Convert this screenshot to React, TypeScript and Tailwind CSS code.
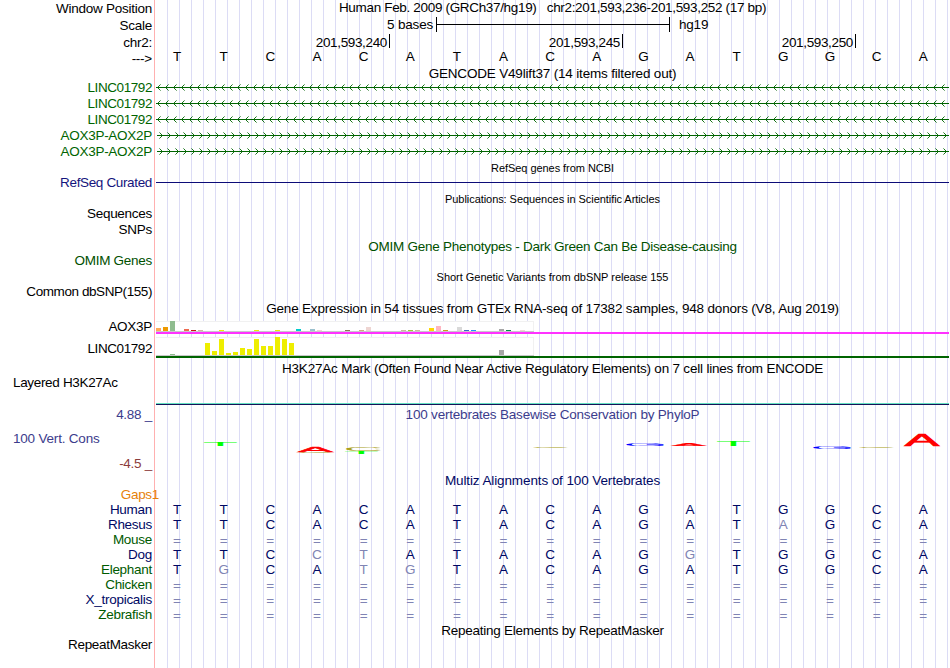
import React from 'react';

type Bar = [number, number, string];

const SEQ = 'TTCACATACAGATGGCA';

const AOX3P: Bar[] = [
  [0, 3, '#ffaa56'], [1, 4, '#ee9a00'], [2, 10, '#8fbc8f'], [4, 2, '#ee6a50'], [5, 1, '#cd1010'],
  [6, 1, '#cdb79e'], [9, 1, '#eeee00'], [14, 1, '#eeee00'], [17, 1, '#eeee00'], [20, 2, '#00cdcd'],
  [22, 2, '#9ac0cd'], [23, 1, '#eed5d2'], [27, 1, '#8b7355'], [29, 1, '#cdaa7d'], [30, 4, '#eed5d2'],
  [35, 1, '#cdb79e'], [36, 1, '#9acd32'], [37, 1, '#cdb79e'], [39, 3, '#ffd700'], [40, 5, '#ffb6c1'],
  [41, 1, '#cd9b1d'], [43, 4, '#d9d9d9'], [44, 1, '#3a5fcd'], [45, 1, '#1e90ff'], [49, 2, '#a6a6a6'],
  [50, 1, '#008b45'], [52, 1, '#eed5d2'],
];

const LINC: Bar[] = [
  [2, 1, '#8fbc8f'], [7, 12, '#eeee00'], [8, 4, '#eeee00'], [9, 16, '#eeee00'], [10, 2, '#eeee00'],
  [11, 3, '#eeee00'], [12, 7, '#eeee00'], [13, 6, '#eeee00'], [14, 16, '#eeee00'], [15, 9, '#eeee00'],
  [16, 9, '#eeee00'], [17, 18, '#eeee00'], [18, 16, '#eeee00'], [19, 12, '#eeee00'], [49, 5, '#a6a6a6'],
];

// lower case marks a base that differs from human
const SPECIES = [
  { name: 'Human', color: 'text-[#000864]', seq: 'TTCACATACAGATGGCA' },
  { name: 'Rhesus', color: 'text-[#000864]', seq: 'TTCACATACAGATaGCA' },
  { name: 'Mouse', color: 'text-[#005a00]', seq: '=================' },
  { name: 'Dog', color: 'text-[#000864]', seq: 'TTCctATACAGgTGGCA' },
  { name: 'Elephant', color: 'text-[#005a00]', seq: 'TgCAtgTACAGATGGCA' },
  { name: 'Chicken', color: 'text-[#005a00]', seq: '=================' },
  { name: 'X_tropicalis', color: 'text-[#000864]', seq: '=================' },
  { name: 'Zebrafish', color: 'text-[#005a00]', seq: '=================' },
];

// letter, left, right, top, bottom, colour
const LOGO: [string, number, number, number, number, string][] = [
  ['T', 48, 81, 2, 6, '#00ff00'],
  ['C', 143, 177, 11.4, 12.6, '#aaa020'],
  ['A', 142, 177, 7, 12, '#ff0000'],
  ['C', 190, 225, 7, 11, '#aaa020'],
  ['T', 189, 222, 11, 14, '#00ff00'],
  ['C', 377, 412, 7, 8, '#aaa020'],
  ['G', 470, 508, 3, 6, '#0000ff'],
  ['A', 516, 550, 4, 6, '#ff0000'],
  ['T', 561, 594, 1, 6, '#00ff00'],
  ['G', 657, 695, 7, 9, '#0000ff'],
  ['C', 703, 738, 7, 8, '#aaa020'],
  ['A', 749, 783, -5, 6, '#ff0000'],
];

// ink box of each letter at font size 100: left, width, bottom overshoot, height
const INK: Record<string, [number, number, number, number]> = {
  A: [0.3, 66, 0, 68.8],
  C: [5, 63.5, 1, 71],
  G: [5, 66.5, 1, 71],
  T: [2, 57, 0, 68.8],
};

interface RowProps {
  h: string;
  label?: React.ReactNode;
  color?: string;
  labelClass?: string;
  children?: React.ReactNode;
}

const Row = ({ h, label, color = 'text-black', labelClass = 'justify-end pr-[2px] tracking-[-0.28px]', children }: RowProps) => (
  <div className={`flex gap-px ${h}`}>
    <div className={`relative z-10 flex w-[155px] shrink-0 items-center whitespace-pre border-r border-[#ffb0b0] ${color} ${labelClass}`}>
      {label}
    </div>
    <div className="w-[793px] shrink-0 bg-[linear-gradient(to_right,#dcdcf5_1px,transparent_1px)] bg-[length:12px_100%] bg-[position:11px_0]">
      {children}
    </div>
  </div>
);

const Title = ({ children, className = 'tracking-[-0.2px]' }: { children: React.ReactNode; className?: string }) => (
  <div className={`flex h-full items-center justify-center whitespace-pre ${className}`}>{children}</div>
);

const Bases = ({ seq, className = '' }: { seq: string; className?: string }) => (
  <div className={`-ml-[2.3px] flex h-full w-[793px] items-center ${className}`}>
    {seq.split('').map((c, i) => (
      <span
        key={i}
        className={`flex-1 text-center ${c === '=' ? 'pt-[3px] text-[#8084b4]' : c !== c.toUpperCase() ? 'text-[#8084b4]' : ''}`}
      >
        {c.toUpperCase()}
      </span>
    ))}
  </div>
);

const Gene = ({ left }: { left?: boolean }) => (
  <svg width="793" height="16" shapeRendering="crispEdges" fill="#006400" className="block">
    <rect x={left ? 0 : 1} y="7" width="793" height="1" />
    {Array.from({ length: 100 }, (_, i) => {
      const x = left ? 1 + i * 8 : 6 + i * 8;
      const d = left ? 1 : -1;
      return (
        <g key={i}>
          {[1, 2, 3].map((n) => (
            <g key={n} opacity={n === 3 ? 0.5 : 0.9}>
              <rect x={x + d * n} y={7 - n} width="1" height="1" />
              <rect x={x + d * n} y={7 + n} width="1" height="1" />
            </g>
          ))}
        </g>
      );
    })}
  </svg>
);

const Expression = ({ bars, height, line }: { bars: Bar[]; height: number; line: string }) => (
  <svg width="793" height={height + 3} shapeRendering="crispEdges" className="block">
    <rect width="378" height={height} fill="#fff" />
    <rect width="378" height="1" fill="#f1f1f1" />
    <rect x="377" width="1" height={height} fill="#f1f1f1" />
    <rect y={height} width="378" height="1" fill="#c8c8c8" />
    {bars.map(([k, h, c]) => (
      <rect key={k} x={k * 7} y={height - h} width="5" height={h} fill={c} />
    ))}
    <rect y={height + 1} width="793" height="2" fill={line} />
  </svg>
);

const Logo = () => (
  <svg width="793" height="18" className="block overflow-visible">
    {LOGO.map(([ch, l, r, t, b, c], i) => {
      const [ix, iw, over, ih] = INK[ch];
      const sx = (r - l) / iw;
      const sy = (b - t) / ih;
      return (
        <text
          key={i}
          fill={c}
          stroke={c}
          strokeWidth={ch === 'A' ? 4 : 0}
          fontSize="100"
          letterSpacing="0"
          transform={`translate(${l - ix * sx} ${b - over * sy}) scale(${sx} ${sy})`}
        >
          {ch}
        </text>
      );
    })}
  </svg>
);

const App: React.FC = () => (
  <div className="h-[668px] w-[950px] overflow-hidden bg-white font-['Liberation_Sans',Arial,sans-serif] text-[13.5px] leading-none text-black">
    <Row h="h-[17px]" label="Window Position" labelClass="justify-end pr-[2px] tracking-[-0.25px]">
      <Title className="pb-px tracking-[-0.33px]">{'Human Feb. 2009 (GRCh37/hg19)   chr2:201,593,236-201,593,252 (17 bp)'}</Title>
    </Row>
    <Row h="h-[17px]" label="Scale" labelClass="justify-end pr-[2px] tracking-[-0.25px]">
      <div className="flex h-[15px] items-center tracking-[-0.2px]">
        <span className="w-[277px] text-right">5 bases</span>
        <div className="ml-[3px] flex h-[15px] w-[234px] items-center border-x border-black">
          <div className="h-px w-full bg-black" />
        </div>
        <span className="ml-[9px]">hg19</span>
      </div>
    </Row>
    <Row h="h-[17px]" label="chr2:" labelClass="justify-end pr-[2px] tracking-[-0.25px]">
      <div className="flex h-[14px] text-right leading-[17px] tracking-[-0.35px]">
        <span className="w-[234px] border-r border-black pr-[2px]">201,593,240</span>
        <span className="w-[233px] border-r border-black pr-[2px]">201,593,245</span>
        <span className="w-[233px] border-r border-black pr-[2px]">201,593,250</span>
      </div>
    </Row>
    <Row h="h-[15px]" label="--->" labelClass="justify-end pr-[2px] tracking-[-0.25px]">
      <Bases seq={SEQ} className="pb-[4px]" />
    </Row>
    <Row h="h-[14px]">
      <Title className="pt-[2px] tracking-[-0.18px]">GENCODE V49lift37 (14 items filtered out)</Title>
    </Row>
    {[0, 1, 2].map((i) => (
      <Row key={i} h="h-[16px]" label="LINC01792" color="text-[#006400]" labelClass="justify-end pr-[2px] tracking-[-0.42px]">
        <Gene left />
      </Row>
    ))}
    {[0, 1].map((i) => (
      <Row key={i} h="h-[16px]" label="AOX3P-AOX2P" color="text-[#006400]">
        <Gene />
      </Row>
    ))}
    <Row h="h-[15px]">
      <Title className="pt-[2px] text-[11px] tracking-[-0.05px]">RefSeq genes from NCBI</Title>
    </Row>
    <Row h="h-[16px]" label="RefSeq Curated" color="text-[#14147d]" labelClass="justify-end pr-[2px] tracking-[-0.35px]">
      <div className="h-[8px] border-b border-[#0c0c78]" />
    </Row>
    <Row h="h-[15px]">
      <Title className="pt-[2px] text-[11px] tracking-[-0.06px]">Publications: Sequences in Scientific Articles</Title>
    </Row>
    <Row h="h-[16px]" label="Sequences" />
    <Row h="h-[16px]" label="SNPs" />
    <Row h="h-[15px]">
      <Title className="pt-[3px] text-[#005000] tracking-[-0.25px]">OMIM Gene Phenotypes - Dark Green Can Be Disease-causing</Title>
    </Row>
    <Row h="h-[16px]" label="OMIM Genes" color="text-[#005000]" />
    <Row h="h-[15px]">
      <Title className="pt-[2px] text-[11px] tracking-[-0.03px]">Short Genetic Variants from dbSNP release 155</Title>
    </Row>
    <Row h="h-[16px]" label="Common dbSNP(155)" labelClass="justify-end pr-[2px] tracking-[-0.42px]" />
    <Row h="h-[21px]">
      <Title className="pb-[4px] tracking-[-0.18px]">Gene Expression in 54 tissues from GTEx RNA-seq of 17382 samples, 948 donors (V8, Aug 2019)</Title>
    </Row>
    <Row h="h-[16px]" label="AOX3P" labelClass="justify-end pr-[2px] pb-[5px] tracking-[-0.28px]">
      <Expression bars={AOX3P} height={10} line="#ff32ff" />
    </Row>
    <Row h="h-[24px]" label="LINC01792" labelClass="justify-end pr-[2px] tracking-[-0.42px]">
      <Expression bars={LINC} height={18} line="#006400" />
    </Row>
    <Row h="h-[15px]">
      <Title>H3K27Ac Mark (Often Found Near Active Regulatory Elements) on 7 cell lines from ENCODE</Title>
    </Row>
    <Row h="h-[32px]" label="Layered H3K27Ac" labelClass="pl-[13px] pb-[18px] tracking-[-0.33px]">
      <div className="h-[29px] border-b border-[#14145a]">
        <div className="h-[28px] border-b border-[#64e0c0]" />
      </div>
    </Row>
    <Row h="h-[14px]" label="4.88 _" color="text-[#3c3c8c]">
      <Title className="text-[#3c3c8c] tracking-[-0.2px]">100 vertebrates Basewise Conservation by PhyloP</Title>
    </Row>
    <Row h="h-[16px]" />
    <Row h="h-[20px]" label="100 Vert. Cons" color="text-[#3c3c8c]" labelClass="pl-[13px] pb-[18px] tracking-[-0.2px]">
      <div className="pt-[2px]">
        <Logo />
      </div>
    </Row>
    <Row h="h-[14px]" label="-4.5 _" color="text-[#8c3c3c]" labelClass="justify-end pr-[2px] pb-[2px] tracking-[-0.28px]" />
    <Row h="h-[17px]">
      <Title className="text-[#000864] tracking-[-0.11px]">Multiz Alignments of 100 Vertebrates</Title>
    </Row>
    <Row
      h="h-[14px]"
      label={<span className="-mr-[5px]">Gaps1</span>}
      color="text-[#e6820a]"
      labelClass="justify-end pb-[2px] tracking-[-0.3px]"
    />
    {SPECIES.map((s) => (
      <Row key={s.name} h="h-[15px]" label={s.name} color={s.color} labelClass="justify-end pr-[2px] pb-[2px] tracking-[-0.28px]">
        <Bases seq={s.seq} className="pb-[2px] text-[#000864]" />
      </Row>
    ))}
    <Row h="h-[16px]">
      <Title className="tracking-[-0.25px]">Repeating Elements by RepeatMasker</Title>
    </Row>
    <Row h="h-[30px]" label="RepeatMasker" labelClass="justify-end pr-[2px] pb-[19px] tracking-[-0.32px]" />
  </div>
);

export default App;
